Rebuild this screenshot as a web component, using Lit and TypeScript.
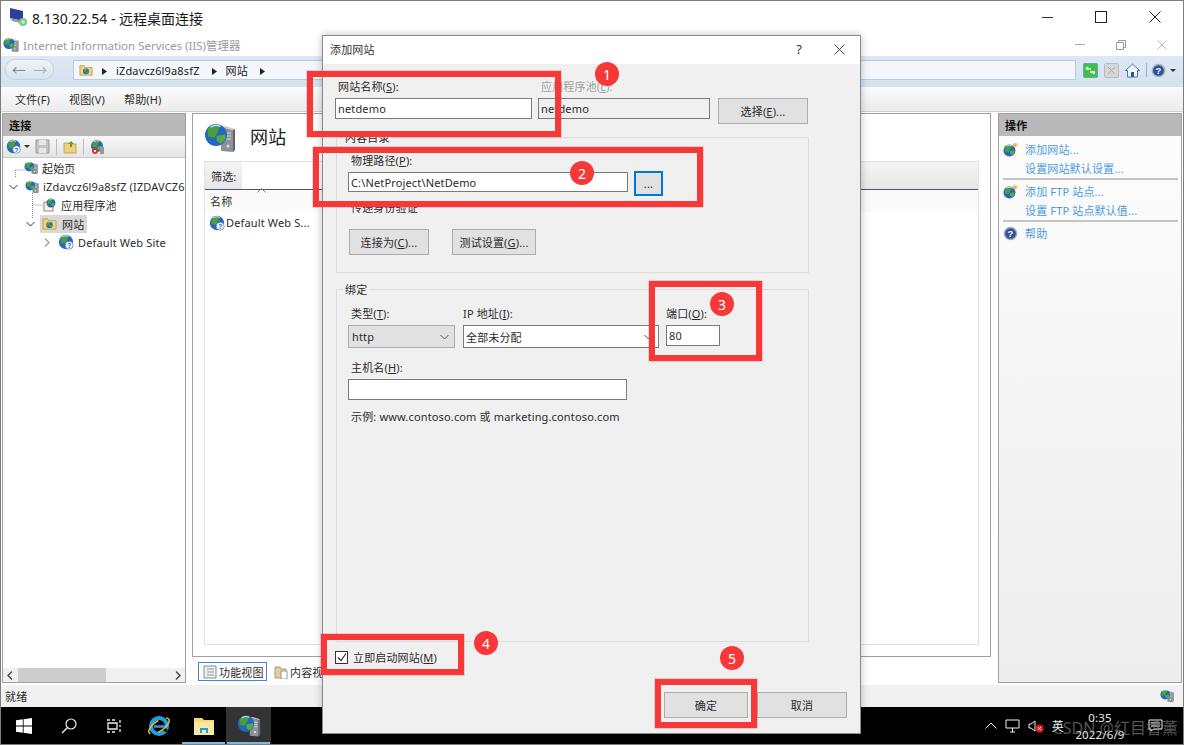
import { LitElement, html, css, svg } from "lit";
import { customElement } from "lit/decorators.js";

const globe = (cx: number, cy: number, r: number) => svg`
  <circle cx=${cx} cy=${cy} r=${r} fill="#2467c0"/>
  <path d="M${cx - r * 0.75} ${cy - r * 0.6}q${r * 0.6} ${-r * 0.5} ${r * 1.1} ${-r * 0.25}l${-r * 0.2} ${r * 0.6}l${-r * 0.3} ${r * 0.5}l${-r * 0.6} ${-r * 0.1}z" fill="#4a9e3c"/>
  <path d="M${cx + r * 0.05} ${cy + r * 0.1}l${r * 0.8} ${-r * 0.15}q${r * 0.1} ${r * 0.6} ${-r * 0.45} ${r * 0.85}l${-r * 0.35} ${-r * 0.3}z" fill="#5aa83f"/>
  <path d="M${cx - r * 0.5} ${cy - r * 0.72}q${r * 0.5} ${-r * 0.3} ${r * 0.9} ${-r * 0.05}" stroke="#bfe2ff" stroke-width="${r * 0.14}" fill="none"/>`;

const server = (size: number) => html`<svg width=${size} height=${size} viewBox="0 0 32 32">
  <path d="M17 5l12 3v22l-12-1z" fill="#8d9296"/><path d="M17 5l4-1 10 3-2 1z" fill="#c6cacd"/><path d="M29 8l2-1v21l-2 2z" fill="#5f6468"/>
  <path d="M20 11h7M20 14h7M20 17h7" stroke="#d5d8da" stroke-width="1.2"/><circle cx="24" cy="24" r="1.5" fill="#dfe2e4"/>
  ${globe(12, 13, 11)}
</svg>`;

const webSite = (size: number) => html`<svg width=${size} height=${size} viewBox="0 0 16 16">
  ${globe(8, 8, 7.2)}
  <circle cx="11.2" cy="11.2" r="4" fill="#f3f6fa" stroke="#4a74b4" stroke-width=".7"/>
  <text x="11.2" y="13.6" font-size="6.5" font-weight="700" text-anchor="middle" fill="#2a56a4" font-family="Liberation Sans">?</text>
</svg>`;

const folderIcon = (size: number) => html`<svg width=${size} height=${size} viewBox="0 0 16 16">
  <path d="M1 3h5l1 2h8v9H1z" fill="#f0d27c" stroke="#b8973f" stroke-width=".8"/>
  ${globe(8, 9.5, 3.4)}
</svg>`;

const addSite = html`<svg width="15" height="15" viewBox="0 0 15 15">
  ${globe(6.5, 8.5, 6)}
  <path d="M12 0l.8 2 2-.5-1.2 1.7 1.2 1.6-2-.4-.8 2-.8-2-2 .4 1.2-1.6L9.200 1.500l2 .5z" fill="#f4b73c"/>
</svg>`;

const helpIcon = (size: number) => html`<svg width=${size} height=${size} viewBox="0 0 16 16">
  <circle cx="8" cy="8" r="7.300" fill="#a9adb3"/><circle cx="8" cy="8" r="5.700" fill="#2c50a8"/>
  <text x="8" y="11.500" font-size="10" font-weight="700" text-anchor="middle" fill="#fff" font-family="Liberation Sans">?</text>
</svg>`;

const chevDown = (color = "#555") => html`<svg width="9" height="6" viewBox="0 0 9 6"><path d="M.5 1l4 4 4-4" fill="none" stroke=${color} stroke-width="1"/></svg>`;
const chevRight = (color = "#999") => html`<svg width="6" height="9" viewBox="0 0 6 9"><path d="M1 .5l4 4-4 4" fill="none" stroke=${color} stroke-width="1.200"/></svg>`;
const crumbArrow = html`<svg width="5" height="7" viewBox="0 0 5 7"><path d="M0 0l5 3.500L0 7z" fill="#222"/></svg>`;
const xIcon = (size: number, color: string) => html`<svg width=${size} height=${size} viewBox="0 0 12 12"><path d="M.5.5l11 11M11.500.5l-11 11" stroke=${color} stroke-width="1" fill="none"/></svg>`;

const treeRows: Array<[number, any, string, boolean]> = [
  [23, server(14), "起始页", false],
  [24, server(14), "iZdavcz6l9a8sfZ (IZDAVCZ6", false],
  [41, html`<svg width="15" height="15" viewBox="0 0 15 15"><path d="M2 4h9v9H2z" fill="#f5f5f5" stroke="#b44" stroke-width=".8"/>${globe(9, 5, 4.500)}</svg>`, "应用程序池", false],
  [39, folderIcon(15), "网站", true],
  [57, webSite(16), "Default Web Site", false],
];

@customElement("app-root")
export class AppRoot extends LitElement {
  static styles = css`
    :host { display: block; width: 1184px; height: 745px; overflow: hidden; font: 11px "Noto Sans", "Noto Sans CJK SC", sans-serif; letter-spacing: .15px; color: #2b2b2b; }
    * { box-sizing: border-box; }
    .desk { position: relative; width: 1184px; height: 745px; border: 1px solid #7d7d7d; background: #fff; display: flex; flex-direction: column; }
    .rdp { height: 32px; flex: none; display: flex; align-items: center; position: relative; padding-left: 9px; font-size: 14px; color: #1a1a1a; letter-spacing: 0; gap: 4px; }
    .rdp-title { margin-top: 1px; }
    .ctl { display: flex; align-items: center; margin-left: auto; }
    .ctl span { display: flex; justify-content: center; align-items: center; }
    .rdp .ctl span { width: 54px; height: 32px; }
    .rdp .ctl { margin-right: 1px; }
    .min { width: 11px; height: 1px; background: #333; }
    .max { width: 12px; height: 12px; border: 1px solid #222; }
    .iis-title { height: 23px; flex: none; display: flex; align-items: center; padding-left: 2px; color: #9a9a9a; gap: 4px; font-size: 11.500px; letter-spacing: 0; }
    .iis-title .ctl span { width: 41px; height: 23px; }
    .iis-title .ctl { margin-right: 1px; }
    .min2 { width: 10px; height: 1px; background: #aaa; }
    .addr { height: 31px; flex: none; background: linear-gradient(#dde8f4, #d5e2f0); display: flex; align-items: flex-start; padding: 3px 0 0 4px; }
    .nav { width: 49px; height: 21px; flex: none; border-radius: 10px; border: 1px solid #c4d2e0; background: linear-gradient(#eef3f8, #d7e2ee); display: flex; align-items: center; justify-content: space-around; color: #7d8996; font-size: 14px; padding: 0 2px; }
    .nav b { font-weight: 400; line-height: 1; }
    .nav b + b { color: #a6b1bd; }
    .field { margin-left: 19px; margin-top: 1px; width: 1003px; flex: none; height: 20px; background: #f3f7fb; border: 1px solid #bccbda; display: flex; align-items: center; padding-left: 5px; color: #222; }
    .field svg { flex: none; }
    .crumb { margin-left: 9px; }
    .crumb-next { margin-left: 12px; }
    .tools { display: flex; align-items: center; margin-left: 7px; margin-top: 1px; height: 20px; gap: 6px; flex: none; }
    .tool-sep { width: 1px; height: 14px; background: #aab; margin-right: -2px; }
    .menu { height: 25px; flex: none; background: linear-gradient(#fbfbfb, #ececec); display: flex; align-items: center; padding-left: 14px; gap: 19px; border-bottom: 1px solid #d0d0d0; }
    .panels { height: 570px; margin-top: 1px; flex: none; display: flex; padding-left: 1px; gap: 6px; }
    .left, .right { width: 184px; border: 1px solid #a0a0a0; display: flex; flex-direction: column; flex: none; }
    .right { margin-left: 1px; background: linear-gradient(#fdfdfd, #ededed); }
    .phead { height: 22px; flex: none; background: #b9b9b9; display: flex; align-items: center; padding: 0 0 0 6px; font-weight: 700; color: #111; }
    .tbar { height: 22px; flex: none; background: linear-gradient(#f8f8f8, #e4e4e4); display: flex; align-items: center; gap: 5px; padding-left: 3px; border-bottom: 1px solid #c8c8c8; }
    .drop { width: 0; height: 0; border: 3px solid transparent; border-top: 3px solid #333; border-bottom: 0; margin-left: -2px; }
    .sep { width: 1px; height: 16px; background: #bdbdbd; margin: 0 1px; }
    .tree { flex: 1; position: relative; background: #fff; padding-top: 1px; min-height: 0; }
    .lines { position: absolute; left: 0; top: 0; }
    .row { height: 18.500px; display: flex; align-items: center; white-space: nowrap; position: relative; overflow: hidden; }
    .item { height: 18px; display: flex; align-items: center; gap: 2px; }
    .item.sel { background: #d9d9d9; width: 47px; padding-left: 2px; gap: 3px; }
    .lab { padding: 0 2px; }
    .tw { position: absolute; display: flex; align-items: center; justify-content: center; width: 10px; height: 10px; top: 4px; }
    .scroll { height: 14px; flex: none; background: #f0f0f0; display: flex; align-items: center; padding: 0 4px; justify-content: space-between; }
    .thumb { width: 88px; height: 14px; background: #cdcdcd; margin-left: 5px; margin-right: auto; }
    .mid { width: 799px; flex: none; display: flex; flex-direction: column; }
    .center { height: 544px; flex: none; border: 1px solid #a0a0a0; background: #fff; padding: 7px 11px 11px; display: flex; flex-direction: column; }
    .chead { display: flex; align-items: center; height: 33px; gap: 14px; font-size: 18px; color: #222; margin-bottom: 7px; flex: none; }
    .chead span { margin-top: -4px; }
    .list { flex: 1; border: 1px solid #e2e2e2; display: flex; flex-direction: column; min-height: 0; }
    .filter { height: 28px; flex: none; background: linear-gradient(#f4f4f4, #e6e6e6); border-bottom: 1px solid #4d4d80; display: flex; align-items: center; padding-left: 6px; }
    .filter i { font-style: normal; width: 31px; }
    .filter u { height: 27px; width: 80px; background: #fff; display: block; }
    .colh { height: 22px; padding-left: 5px; display: flex; align-items: center; position: relative; background: #fafafa; flex: none; }
    .sort { position: absolute; left: 52px; top: -2px; }
    .lrow { display: flex; align-items: center; gap: 1px; padding-left: 4px; height: 21px; }
    .tabs { height: 26px; flex: none; display: flex; align-items: flex-start; padding: 5px 0 0 6px; gap: 3px; }
    .tab { height: 19px; display: flex; align-items: center; gap: 2px; padding: 0 0 0 4px; white-space: nowrap; flex: none; }
    .tab.on { background: #fff; border: 1px solid #3b8ad9; width: 69px; }
    .act { display: flex; align-items: center; color: #4b9bdc; height: 18.500px; padding-left: 26px; position: relative; white-space: nowrap; }
    .act svg { position: absolute; left: 4px; top: 2px; }
    .acts { padding-top: 4px; }
    .div { height: 2px; background: #c4c4c4; margin: 1px 3px 2px 4px; }
    .status { height: 22px; margin-top: 2px; flex: none; background: #f1f1f1; display: flex; align-items: center; padding: 0 9px 0 4px; justify-content: space-between; }
    .taskbar { flex: 1; background: #000; display: flex; align-items: stretch; color: #f0f0f0; position: relative; }
    .tb { width: 45px; display: flex; align-items: center; justify-content: center; flex: none; position: relative; }
    .tb.open::after { content: ""; position: absolute; left: 1px; right: 1px; bottom: 0; height: 2px; background: #76b9ed; }
    .tb.on { background: #333; }
    .tray { margin-left: auto; display: flex; align-items: center; gap: 8px; padding-right: 20px; position: relative; }
    .clock { display: flex; flex-direction: column; align-items: center; line-height: 17px; width: 62px; margin: 0 9px 0 -3px; font-size: 11.500px; color: #e8e8e8; }
    .mark { position: absolute; right: 5px; top: 8px; color: rgba(170, 170, 170, .5); font-size: 16px; white-space: nowrap; letter-spacing: 0; }
    .dialog { position: absolute; left: 321px; top: 34px; width: 539px; height: 699px; border: 1px solid #8a8a8a; background: #f0f0f0; display: flex; flex-direction: column; box-shadow: 0 0 8px rgba(0,0,0,.25); }
    .dtitle { height: 28px; flex: none; background: #fff; display: flex; align-items: center; padding: 0 15px 2px 7px; justify-content: space-between; color: #333; }
    .dctl { display: flex; align-items: center; gap: 32px; font-size: 13px; }
    .dbody { flex: 1; padding: 15px 13px 0 12px; display: flex; flex-direction: column; }
    .top { display: grid; grid-template-columns: 197px 172px 92px; column-gap: 6px; row-gap: 3px; grid-template-rows: 16px auto; align-items: start; }
    .top .btn { margin-left: 2px; }
    .lbl { height: 16px; line-height: 16px; padding-left: 3px; white-space: nowrap; }
    .lbl u { text-underline-offset: 1px; }
    .mute { color: #a0a0a0; }
    .inp { height: 21px; border: 1px solid #7a7a7a; background: #fff; display: flex; align-items: center; padding-left: 2px; white-space: nowrap; overflow: hidden; }
    .inp.dis { background: #f0f0f0; }
    .btn { height: 26px; background: #e1e1e1; border: 1px solid #adadad; display: flex; align-items: center; justify-content: center; white-space: nowrap; }
    .group { width: 473px; margin-left: 1px; border: 1px solid #dcdcdc; padding-left: 11px; display: flex; flex-direction: column; flex: none; }
    .legend { height: 16px; line-height: 16px; margin: -8px 0 0 -5px; padding: 0 2px; background: #f0f0f0; align-self: flex-start; }
    .g1 { height: 136px; margin-top: 13px; }
    .g2 { height: 353px; margin-top: 16px; }
    .path { display: flex; gap: 6px; margin-top: 3px; }
    .path .inp { width: 280px; height: 20px; }
    .more { width: 29px; height: 25px; margin-top: -1px; border: 2px solid #0078d7; }
    .btns { display: flex; gap: 23px; margin: 13px 0 0 1px; }
    .bind { display: grid; grid-template-columns: 107px 196px 54px; column-gap: 8px; row-gap: 3px; margin-top: 8px; }
    .sel-box { height: 23px; border: 1px solid #adadad; background: #e1e1e1; display: flex; align-items: center; justify-content: space-between; padding: 0 5px 0 3px; }
    .sel-box.w { background: #fff; border-color: #7a7a7a; padding-left: 2px; }
    .bind .port { margin-left: -1px; width: 54px; }
    .check { display: flex; align-items: center; gap: 5px; margin-top: 8px; height: 14px; flex: none; }
    .cb { width: 13px; height: 13px; border: 1px solid #333; background: #fff; display: flex; align-items: center; justify-content: center; }
    .foot { display: flex; justify-content: flex-end; gap: 9px; margin-top: 28px; }
    .foot .ok { width: 84px; } .foot .no { width: 90px; }
    .rbox { position: absolute; border: 6px solid #f63838; box-shadow: 0 0 0 1px rgba(246,56,56,.2); }
    .badge { position: absolute; width: 24px; height: 24px; border-radius: 50%; background: #f63838; color: #fff; font-size: 14px; display: flex; align-items: center; justify-content: center; }
  `;

  private lbl(t: string, k: string, tail = ":", extra = "") {
    return html`<div class="lbl ${extra}">${t}(<u>${k}</u>)${tail}</div>`;
  }

  render() {
    const boxes = [[306, 70, 254, 66], [312, 146, 390, 60], [648, 280, 113, 80], [320, 633, 143, 41], [654, 678, 102, 49]];
    const badges = [[594, 61, "1"], [569, 160, "2"], [709, 291, "3"], [473, 630, "4"], [719, 645, "5"]];
    return html`<div class="desk">
      <div class="rdp">
        <svg width="18" height="20" viewBox="0 0 18 20"><path d="M0 1l13 3v10L0 11z" fill="#2b3f9e"/><path d="M0 11l13 3 2 3-13-3z" fill="#999"/><circle cx="13" cy="15" r="4" fill="#7c8"/><path d="M11 15h4M13 13v4" stroke="#fff" stroke-width=".8"/></svg>
        <span class="rdp-title">8.130.22.54 - 远程桌面连接</span>
        <div class="ctl"><span><i class="min"></i></span><span><i class="max"></i></span><span>${xIcon(12, "#222")}</span></div>
      </div>
      <div class="iis-title">${server(16)}<span>Internet Information Services (IIS)管理器</span>
        <div class="ctl"><span><i class="min2"></i></span><span><svg width="10" height="10" viewBox="0 0 10 10"><path d="M.5 2.500h7v7h-7zM2.500 2.500v-2h7v7h-2" fill="none" stroke="#999"/></svg></span><span>${xIcon(10, "#aaa")}</span></div>
      </div>
      <div class="addr">
        <div class="nav"><b>←</b><b>→</b></div>
        <div class="field">${folderIcon(14)}<span class="crumb">${crumbArrow}</span><span class="crumb">iZdavcz6l9a8sfZ</span><span class="crumb-next">${crumbArrow}</span><span class="crumb">网站</span><span class="crumb-next">${crumbArrow}</span></div>
        <div class="tools">
          <svg width="15" height="15" viewBox="0 0 15 15"><rect x=".5" y=".5" width="14" height="14" rx="1" fill="#3fc04a" stroke="#6a9"/><path d="M3 6h5M3 6l2-2M12 9H7M12 9l-2 2" stroke="#fff" stroke-width="1.400" fill="none"/></svg>
          <svg width="15" height="15" viewBox="0 0 15 15"><rect x=".5" y=".5" width="14" height="14" rx="1" fill="#d4d6d8" stroke="#bbb"/><path d="M4 4l7 7M11 4l-7 7" stroke="#aaa"/></svg>
          <svg width="15" height="15" viewBox="0 0 15 15"><path d="M7.500 1L.5 7.500h2V14h10V7.500h2z" fill="#f2f5f8" stroke="#4d78b0"/><path d="M6 9h3v5H6z" fill="#2b5c98"/></svg>
          <i class="tool-sep"></i>${helpIcon(15)}<i class="drop"></i>
        </div>
      </div>
      <div class="menu"><span>文件(F)</span><span>视图(V)</span><span>帮助(H)</span></div>
      <div class="panels">
        <div class="left">
          <div class="phead">连接</div>
          <div class="tbar">
            ${webSite(15)}<i class="drop"></i>
            <svg width="15" height="15" viewBox="0 0 15 15"><path d="M1 1h13v13H1z" fill="#c3c3c3" stroke="#999"/><path d="M4 1h7v5H4zM4 9h7v5H4z" fill="#e8e8e8"/></svg>
            <i class="sep"></i>
            <svg width="14" height="14" viewBox="0 0 14 14"><path d="M1 3h5l1 1h6v9H1z" fill="#f0d27c" stroke="#b8973f" stroke-width=".8"/><path d="M8 1l3 3H9v3H7V4H5z" fill="#4fa53a"/></svg>
            <i class="sep"></i>
            <svg width="16" height="16" viewBox="0 0 16 16">${globe(7, 7, 6)}<path d="M10 8h4v7h-4z" fill="#999"/><circle cx="5" cy="12" r="3" fill="#d33"/><path d="M4 11l2 2M6 11l-2 2" stroke="#fff" stroke-width=".8"/></svg>
          </div>
          <div class="tree">
            <svg class="lines" width="60" height="100"><path d="M12.500 12v8M12.500 12H22M29.500 35v26M29.500 47H40" stroke="#888" stroke-dasharray="1 1" fill="none"/></svg>
            ${treeRows.map(([x, ic, t, sel], i) => html`<div class="row" style="padding-left:${(x as number) - 2}px">
              <span class="item ${sel ? "sel" : ""}">${ic}<span class="lab">${t}</span></span>
              ${i === 1 ? html`<span class="tw" style="left:5px">${chevDown("#333")}</span>` : ""}
              ${i === 3 ? html`<span class="tw" style="left:22px">${chevDown("#333")}</span>` : ""}
              ${i === 4 ? html`<span class="tw" style="left:39px">${chevRight()}</span>` : ""}
            </div>`)}
          </div>
          <div class="scroll"><svg width="6" height="9" viewBox="0 0 6 9" style="transform:scaleX(-1)"><path d="M1 .5l4 4-4 4" fill="none" stroke="#444" stroke-width="1.400"/></svg><i class="thumb"></i><svg width="6" height="9" viewBox="0 0 6 9"><path d="M1 .5l4 4-4 4" fill="none" stroke="#444" stroke-width="1.400"/></svg></div>
        </div>
        <div class="mid">
          <div class="center">
            <div class="chead">${server(32)}<span>网站</span></div>
            <div class="list">
              <div class="filter"><i>筛选:</i><u></u></div>
              <div class="colh">名称<svg class="sort" width="9" height="5" viewBox="0 0 9 5"><path d="M.5 4.500l4-4 4 4" fill="none" stroke="#777"/></svg></div>
              <div class="lrow">${webSite(16)}<span>Default Web S...</span></div>
            </div>
          </div>
          <div class="tabs">
            <div class="tab on"><svg width="14" height="14" viewBox="0 0 14 14"><path d="M1 1h12v12H1z" fill="#eee" stroke="#7d8a99"/><path d="M4 4h7M4 7h7M4 10h7" stroke="#8a97a5"/></svg><span>功能视图</span></div>
            <div class="tab"><svg width="14" height="14" viewBox="0 0 14 14"><path d="M1 2h5l1 2h5v9H1z" fill="#e7cf8e" stroke="#a98"/><path d="M7 6h6v8H7z" fill="#fff" stroke="#89a"/></svg><span>内容视图</span></div>
          </div>
        </div>
        <div class="right">
          <div class="phead">操作</div>
          <div class="acts">
            <div class="act">${addSite}添加网站...</div>
            <div class="act">设置网站默认设置...</div>
            <div class="div"></div>
            <div class="act">${addSite}添加 FTP 站点...</div>
            <div class="act">设置 FTP 站点默认值...</div>
            <div class="div"></div>
            <div class="act">${helpIcon(15)}帮助</div>
          </div>
        </div>
      </div>
      <div class="status"><span>就绪</span>${server(14)}</div>
      <div class="taskbar">
        <div class="tb"><svg width="16" height="16" viewBox="0 0 16 16"><path d="M0 2.300l6.800-1v6.300H0zM7.600 1.200L16 0v7.600H7.600zM0 8.400h6.800v6.300l-6.800-1zM7.600 8.400H16V16l-8.400-1.200z" fill="#fff"/></svg></div>
        <div class="tb"><svg width="16" height="16" viewBox="0 0 16 16"><circle cx="10" cy="6" r="5" fill="none" stroke="#eee" stroke-width="1.200"/><path d="M6.300 9.700L1 15" stroke="#eee" stroke-width="1.400"/></svg></div>
        <div class="tb"><svg width="16" height="14" viewBox="0 0 16 14"><path d="M2 4h9v6H2zM1 1h3M6 1h3M1 13h3M6 13h3M14 1v3M14 6v2M14 10v3" fill="none" stroke="#eee" stroke-width="1.300"/></svg></div>
        <div class="tb"><svg width="24" height="24" viewBox="0 0 24 24"><circle cx="12" cy="12" r="8" fill="none" stroke="#1ea0e6" stroke-width="4"/><path d="M7 12.500h12" stroke="#1ea0e6" stroke-width="2.500"/><path d="M17 15l3 2" stroke="#000" stroke-width="3"/><ellipse cx="12" cy="12" rx="12" ry="5" transform="rotate(-35 12 12)" fill="none" stroke="#f2b632" stroke-width="1.500" stroke-dasharray="18 8"/></svg></div>
        <div class="tb open"><svg width="22" height="20" viewBox="0 0 22 20"><path d="M1 2h8l2 2h10v15H1z" fill="#f7d774"/><path d="M1 6h20v13H1z" fill="#fbe7a3"/><path d="M7 12h8v5H7z" fill="#1e9be0"/><path d="M9 14h4v5H9z" fill="#fbe7a3"/></svg></div>
        <div class="tb on open">${server(24)}</div>
        <div class="tray">
          <svg width="12" height="7" viewBox="0 0 12 7"><path d="M.5 6.500L6 1l5.500 5.500" fill="none" stroke="#eee"/></svg>
          <svg width="15" height="14" viewBox="0 0 15 14"><path d="M1 1h13v8H1zM5 13h5M7.500 9v4" fill="none" stroke="#eee"/></svg>
          <svg width="16" height="14" viewBox="0 0 16 14"><path d="M1 5h2l4-3v10L3 9H1z" fill="none" stroke="#eee"/><circle cx="11.500" cy="9.500" r="4" fill="#d81e1e"/><path d="M10 8l3 3M13 8l-3 3" stroke="#fff"/></svg>
          <span style="font-size:12px">英</span>
          <div class="clock"><span>0:35</span><span>2022/6/9</span></div>
          <svg width="15" height="13" viewBox="0 0 15 13"><path d="M1 1h13v9H6l-3 2v-2H1z" fill="none" stroke="#eee"/><path d="M3 4h9M3 7h9" stroke="#eee"/></svg>
          <span class="mark">CSDN @红目香薰</span>
        </div>
      </div>

      <div class="dialog">
        <div class="dtitle"><span>添加网站</span><div class="dctl"><span>?</span>${xIcon(11, "#333")}</div></div>
        <div class="dbody">
          <div class="top">
            ${this.lbl("网站名称", "S")}
            ${this.lbl("应用程序池", "L", ":", "mute")}
            <span></span>
            <div class="inp">netdemo</div>
            <div class="inp dis">netdemo</div>
            <div class="btn"><span>选择(<u>E</u>)...</span></div>
          </div>
          <div class="group g1">
            <div class="legend">内容目录</div>
            <div style="margin-top:7px">${this.lbl("物理路径", "P")}</div>
            <div class="path"><div class="inp">C:\\NetProject\\NetDemo</div><div class="btn more">...</div></div>
            <div class="lbl" style="margin-top:4px">传递身份验证</div>
            <div class="btns"><div class="btn" style="width:80px"><span>连接为(<u>C</u>)...</span></div><div class="btn" style="width:84px"><span>测试设置(<u>G</u>)...</span></div></div>
          </div>
          <div class="group g2">
            <div class="legend">绑定</div>
            <div class="bind">
              ${this.lbl("类型", "T")}
              <div class="lbl" style="padding-left:0">IP 地址(<u>I</u>):</div>
              <div class="lbl port" style="padding-left:0">端口(<u>O</u>):</div>
              <div class="sel-box"><span>http</span>${chevDown()}</div>
              <div class="sel-box w"><span>全部未分配</span>${chevDown()}</div>
              <div class="inp port">80</div>
            </div>
            <div style="margin-top:12px">${this.lbl("主机名", "H")}</div>
            <div class="inp" style="width:279px;margin-top:3px"></div>
            <div class="lbl" style="margin-top:9px">示例: www.contoso.com 或 marketing.contoso.com</div>
          </div>
          <div class="check"><span class="cb"><svg width="10" height="9" viewBox="0 0 10 9"><path d="M1 4.500l3 3 5-7" fill="none" stroke="#333" stroke-width="1.200"/></svg></span><span>立即启动网站(<u>M</u>)</span></div>
          <div class="foot"><div class="btn ok">确定</div><div class="btn no">取消</div></div>
        </div>
      </div>

      ${boxes.map(([x, y, w, h]) => html`<div class="rbox" style="left:${x}px;top:${y}px;width:${w}px;height:${h}px"></div>`)}
      ${badges.map(([x, y, t]) => html`<div class="badge" style="left:${x}px;top:${y}px">${t}</div>`)}
    </div>`;
  }
}
